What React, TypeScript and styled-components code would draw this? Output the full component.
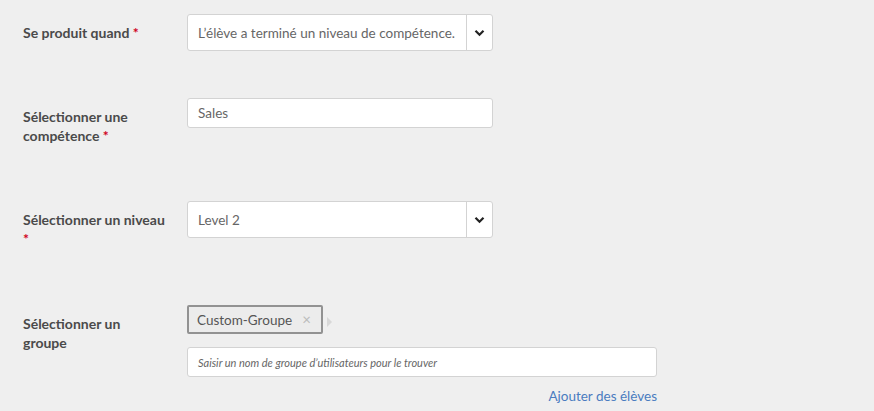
import styled, { createGlobalStyle } from 'styled-components';

const GlobalStyle = createGlobalStyle`
  html, body {
    margin: 0;
    padding: 0;
    background: #efefef;
  }
  body {
    font-family: Lato, "Open Sans", sans-serif;
    color: #555;
  }
`;

const Form = styled.div`
  padding: 14px 0 0 23px;
  width: 640px;
`;

const Row = styled.div<{ $gap: number }>`
  display: flex;
  align-items: flex-start;
  margin-bottom: ${(p) => p.$gap}px;
`;

const Label = styled.div`
  width: 143.5px;
  margin-right: 20.5px;
  padding-top: 9px;
  font-size: 14px;
  font-weight: 700;
  line-height: 19px;
  color: #4a4a4a;
`;

const Req = styled.span`
  color: #d0021b;
`;

const Field = styled.div<{ $width: number }>`
  width: ${(p) => p.$width}px;
`;

const SelectBox = styled.div`
  display: flex;
  height: 37px;
  box-sizing: border-box;
  background: #fff;
  border: 1px solid #d3d3d3;
  border-radius: 3px;
`;

const SelectValue = styled.div`
  flex: 1;
  display: flex;
  align-items: center;
  padding-left: 10px;
  font-size: 13.5px;
  color: #666;
  white-space: nowrap;
`;

const Caret = styled.div`
  width: 25px;
  border-left: 1px solid #d3d3d3;
  display: flex;
  align-items: center;
  justify-content: center;
`;

const TextBox = styled.div<{ $italic?: boolean }>`
  height: 30px;
  box-sizing: border-box;
  background: #fff;
  border: 1px solid #d3d3d3;
  border-radius: 3px;
  display: flex;
  align-items: center;
  padding-left: 10px;
  font-size: ${(p) => (p.$italic ? '11px' : '13.5px')};
  font-style: ${(p) => (p.$italic ? 'italic' : 'normal')};
  color: #666;
`;

const TagLine = styled.div`
  display: flex;
  align-items: center;
  margin-bottom: 13px;
`;

const Tag = styled.div`
  display: flex;
  align-items: center;
  height: 29px;
  box-sizing: border-box;
  width: 136px;
  padding: 0 10px 0 8px;
  border: 2px solid #929292;
  border-radius: 2px;
  background: #ececec;
  font-size: 13.5px;
  color: #555;
  justify-content: space-between;
`;

const Remove = styled.span`
  color: #bbb;
  font-size: 15px;
  line-height: 1;
`;

const Pointer = styled.div`
  width: 0;
  height: 0;
  margin-left: 4px;
  margin-top: 4px;
  border-top: 5px solid transparent;
  border-bottom: 5px solid transparent;
  border-left: 5px solid #d8d8d8;
`;

const LinkRow = styled.div`
  display: flex;
  justify-content: flex-end;
  margin-top: 11px;
`;

const Link = styled.a`
  font-size: 13.5px;
  color: #4a7cc0;
  text-decoration: none;
`;

const Chevron = () => (
  <svg width="11" height="8" viewBox="0 0 11 8">
    <path d="M1.5 1.8 L5.5 5.8 L9.5 1.8" fill="none" stroke="#222" strokeWidth="2.2" />
  </svg>
);

export default function App() {
  return (
    <>
      <GlobalStyle />
      <Form>
        <Row $gap={47}>
          <Label>
            Se produit quand <Req>*</Req>
          </Label>
          <Field $width={306}>
            <SelectBox>
              <SelectValue>L’élève a terminé un niveau de compétence.</SelectValue>
              <Caret>
                <Chevron />
              </Caret>
            </SelectBox>
          </Field>
        </Row>
        <Row $gap={56}>
          <Label>
            Sélectionner une compétence <Req>*</Req>
          </Label>
          <Field $width={306}>
            <TextBox>Sales</TextBox>
          </Field>
        </Row>
        <Row $gap={57}>
          <Label>
            Sélectionner un niveau <Req>*</Req>
          </Label>
          <Field $width={306}>
            <SelectBox>
              <SelectValue>Level 2</SelectValue>
              <Caret>
                <Chevron />
              </Caret>
            </SelectBox>
          </Field>
        </Row>
        <Row $gap={0}>
          <Label>Sélectionner un groupe</Label>
          <Field $width={470}>
            <TagLine>
              <Tag>
                Custom-Groupe <Remove>×</Remove>
              </Tag>
              <Pointer />
            </TagLine>
            <TextBox $italic>Saisir un nom de groupe d’utilisateurs pour le trouver</TextBox>
            <LinkRow>
              <Link href="#">Ajouter des élèves</Link>
            </LinkRow>
          </Field>
        </Row>
      </Form>
    </>
  );
}
